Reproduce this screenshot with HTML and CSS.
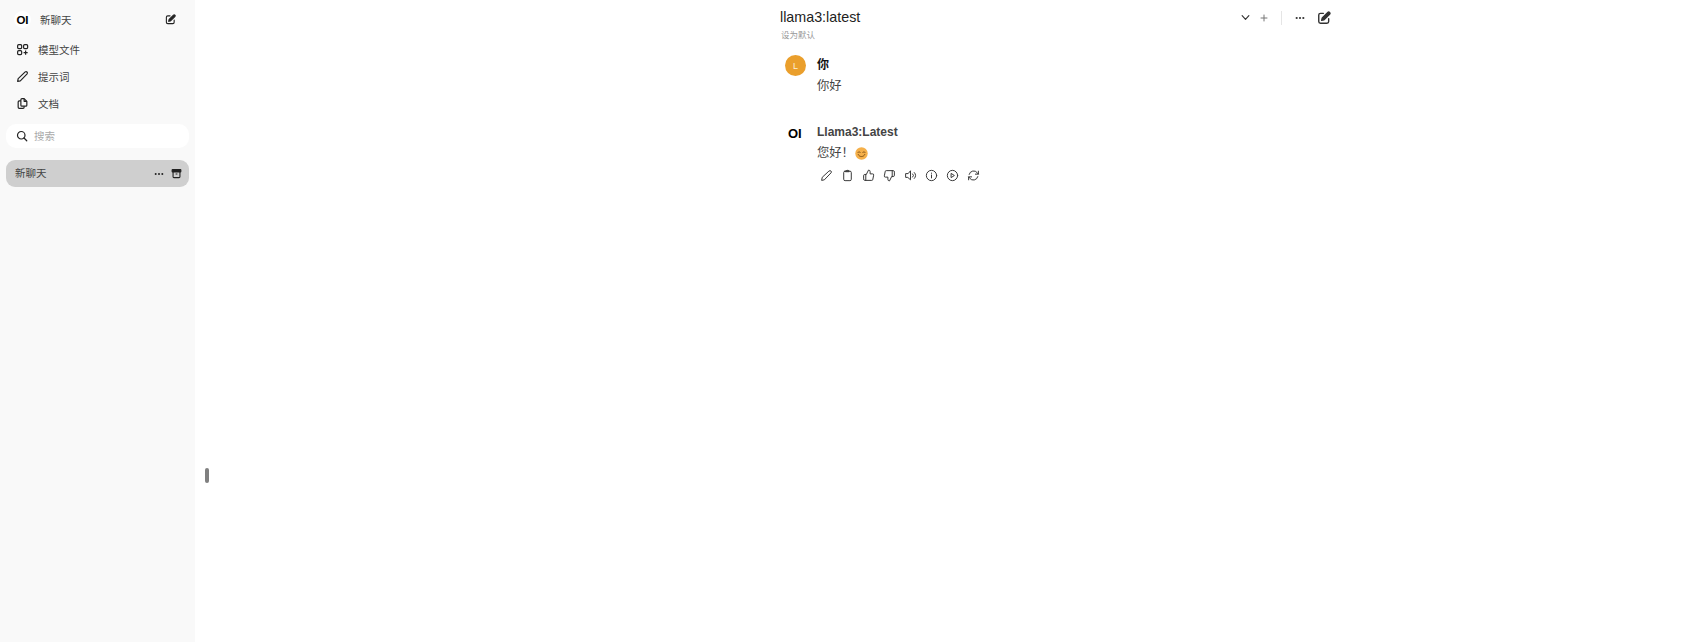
FILE: index.html
```html
<!DOCTYPE html>
<html lang="zh">
<head>
  <meta charset="UTF-8">
  <meta name="viewport" content="width=device-width, initial-scale=1.0">
  <title>新聊天</title>
  <link rel="stylesheet" href="styles.css">
</head>
<body>
  <!-- Barra lateral -->
  <aside class="sidebar">
    <div class="side-head">
      <span class="logo-wrap"><span class="logo small">OI</span></span>
      <span class="side-title">新聊天</span>
      <svg class="ico-new" viewBox="0 0 24 24" fill="none" stroke="currentColor" stroke-width="2.400" stroke-linecap="round" stroke-linejoin="round"><path d="M11 4H6a3 3 0 0 0-3 3v11a3 3 0 0 0 3 3h11a3 3 0 0 0 3-3v-5"/><path d="M18.500 2.500a2.100 2.100 0 0 1 3 3L12 15l-4 1 1-4z" fill="currentColor"/></svg>
    </div>
    <nav class="side-nav">
      <a class="nav-item">
        <svg class="ico" viewBox="0 0 24 24" fill="none" stroke="currentColor" stroke-width="2.200"><rect x="3" y="3" width="7.500" height="7.500" rx="2"/><rect x="14" y="3" width="7.500" height="7.500" rx="2"/><rect x="3" y="14" width="7.500" height="7.500" rx="2"/><path d="M17.750 14v7.500M14 17.750h7.500"/></svg>
        <span>模型文件</span>
      </a>
      <a class="nav-item">
        <svg class="ico" viewBox="0 0 24 24" fill="none" stroke="currentColor" stroke-width="2.200" stroke-linejoin="round"><path d="M17 3.500a2.500 2.500 0 0 1 3.500 3.500L8 20l-5 1 1-5z"/></svg>
        <span>提示词</span>
      </a>
      <a class="nav-item">
        <svg class="ico" viewBox="0 0 24 24" fill="none" stroke="currentColor" stroke-width="2.200" stroke-linejoin="round"><path d="M9 7H6a2 2 0 0 0-2 2v10a2 2 0 0 0 2 2h7a2 2 0 0 0 2-2v-2"/><path d="M9 5a2 2 0 0 1 2-2h4l5 5v7a2 2 0 0 1-2 2h-7a2 2 0 0 1-2-2z"/><path d="M15 3v5h5"/></svg>
        <span>文档</span>
      </a>
    </nav>
    <div class="search">
      <svg class="ico-search" viewBox="0 0 24 24" fill="none" stroke="currentColor" stroke-width="2.400" stroke-linecap="round"><circle cx="10.500" cy="10.500" r="7.500"/><path d="M16 16l5.500 5.500"/></svg>
      <span class="search-text">搜索</span>
    </div>
    <div class="chat-row">
      <span class="chat-name">新聊天</span>
      <svg class="ico-dots" viewBox="0 0 24 24" fill="currentColor"><circle cx="4" cy="12" r="2.400"/><circle cx="12" cy="12" r="2.400"/><circle cx="20" cy="12" r="2.400"/></svg>
      <svg class="ico-archive" viewBox="0 0 24 24" fill="none" stroke="currentColor" stroke-width="2.400" stroke-linejoin="round"><rect x="2.500" y="3.500" width="19" height="5" rx="1" fill="currentColor"/><path d="M4.500 8.500V19a2 2 0 0 0 2 2h11a2 2 0 0 0 2-2V8.500M10 13h4"/></svg>
    </div>
  </aside>

  <div class="drag-handle"></div>

  <!-- Contenido -->
  <main class="main">
    <div class="column">
      <header class="top">
        <div class="model-col">
          <div class="model-name">llama3:latest</div>
          <div class="set-default">设为默认</div>
        </div>
        <div class="top-tools">
          <svg class="chev" viewBox="0 0 24 24" fill="none" stroke="currentColor" stroke-width="3" stroke-linecap="round" stroke-linejoin="round"><path d="M3 7l9 10 9-10"/></svg>
          <svg class="plus" viewBox="0 0 24 24" fill="none" stroke="currentColor" stroke-width="3" stroke-linecap="round"><path d="M12 3v18M3 12h18"/></svg>
          <span class="divider"></span>
          <svg class="dots" viewBox="0 0 24 24" fill="currentColor"><circle cx="4" cy="12" r="2.600"/><circle cx="12" cy="12" r="2.600"/><circle cx="20" cy="12" r="2.600"/></svg>
          <svg class="ico-edit" viewBox="0 0 24 24" fill="none" stroke="currentColor" stroke-width="2.400" stroke-linecap="round" stroke-linejoin="round"><path d="M11 4H6a3 3 0 0 0-3 3v11a3 3 0 0 0 3 3h11a3 3 0 0 0 3-3v-5"/><path d="M18.500 2.500a2.100 2.100 0 0 1 3 3L12 15l-4 1 1-4z" fill="currentColor"/></svg>
        </div>
      </header>

      <section class="msg msg-user">
        <div class="avatar-col"><span class="avatar">L</span></div>
        <div class="msg-body">
          <div class="who">你</div>
          <div class="text">你好</div>
        </div>
      </section>

      <section class="msg msg-bot">
        <div class="avatar-col"><span class="logo big">OI</span></div>
        <div class="msg-body">
          <div class="who who-bot">Llama3:Latest</div>
          <div class="text"><span>您好！</span><svg class="emoji" viewBox="0 0 24 24"><circle cx="12" cy="12" r="11.500" fill="#f5b04a"/><path d="M5.500 10c1-1.800 3-1.800 4 0M14.500 10c1-1.800 3-1.800 4 0" fill="none" stroke="#7a4c14" stroke-width="1.800" stroke-linecap="round"/><path d="M6 14c2 5 10 5 12 0" fill="none" stroke="#7a4c14" stroke-width="1.800" stroke-linecap="round"/></svg></div>
          <div class="actions">
            <svg viewBox="0 0 24 24"><path d="M17 3.500a2.500 2.500 0 0 1 3.500 3.500L8 20l-5 1 1-5z"/></svg>
            <svg viewBox="0 0 24 24"><rect x="5" y="4" width="14" height="17.500" rx="2.500"/><path d="M9 4a2 2 0 0 1 2-1.500h2A2 2 0 0 1 15 4v1H9z"/></svg>
            <svg viewBox="0 0 24 24"><path d="M7 10v11M3 12a2 2 0 0 1 2-2h3l4-8a3 3 0 0 1 3 3v4h4.500a2 2 0 0 1 2 2.400l-1.500 7.600a2 2 0 0 1-2 2H5a2 2 0 0 1-2-2z"/></svg>
            <svg viewBox="0 0 24 24"><path d="M17 14V3M21 12a2 2 0 0 1-2 2h-3l-4 8a3 3 0 0 1-3-3v-4H4.500a2 2 0 0 1-2-2.400l1.500-7.600a2 2 0 0 1 2-2H19a2 2 0 0 1 2 2z"/></svg>
            <svg viewBox="0 0 24 24"><path d="M12 4v16l-5-4.500H3v-7h4zM16 9a4 4 0 0 1 0 6M19 6.500a8 8 0 0 1 0 11"/></svg>
            <svg viewBox="0 0 24 24"><circle cx="12" cy="12" r="9.500"/><path d="M12 11v5.500M12 7.500v.5"/></svg>
            <svg viewBox="0 0 24 24"><circle cx="12" cy="12" r="9.500"/><path d="M10 8.500l5.500 3.500-5.500 3.500z"/></svg>
            <svg viewBox="0 0 24 24"><path d="M4 10a8.500 8.500 0 0 1 15-3l2 2.500M21 4v5.500h-5.500M20 14a8.500 8.500 0 0 1-15 3l-2-2.500M3 20v-5.500h5.500"/></svg>
          </div>
        </div>
      </section>
    </div>
  </main>
</body>
</html>
```

FILE: styles.css
```css
* {
  box-sizing: border-box;
}

html, body {
  height: 100%;
}

body {
  margin: 0;
  display: flex;
  background-color: #fff;
  color: #222;
  font-family: "Liberation Sans", "Noto Sans CJK SC", sans-serif;
  overflow: hidden;
}

svg {
  flex: none;
}

.ico {
  width: 13px;
  height: 13px;
  color: #222;
}

.ico-search {
  width: 12px;
  height: 12px;
  color: #222;
}

/* Barra lateral */
.sidebar {
  width: 195px;
  flex: none;
  background-color: #f9f9f9;
  padding: 6px 6px 0;
  font-size: 10.5px;
  color: #444;
}

.side-head {
  display: flex;
  align-items: center;
  height: 28px;
  padding: 0 13px 1px 8px;
}

.logo-wrap {
  width: 17px;
  height: 17px;
  display: flex;
  align-items: center;
  justify-content: center;
  background-color: #fff;
  border-radius: 50%;
}

.logo {
  font-weight: 700;
  color: #000;
}

.logo.small {
  font-size: 11.5px;
}

.logo.big {
  font-size: 13px;
}

.side-title {
  margin: 0 0 1px 9px;
  flex: 1;
}

.ico-new {
  width: 11px;
  height: 11px;
  color: #222;
}

.side-nav {
  margin-top: 2px;
}

.nav-item {
  display: flex;
  align-items: center;
  gap: 9px;
  height: 27px;
  padding-left: 10px;
}

.search {
  display: flex;
  align-items: center;
  gap: 6px;
  height: 24px;
  margin-top: 7px;
  padding-left: 10px;
  background-color: #fff;
  border-radius: 10px;
  color: #aaa;
}

.search-text {
  font-size: 10.5px;
  margin-bottom: 2px;
}

.chat-row {
  display: flex;
  align-items: center;
  height: 27px;
  margin-top: 12px;
  padding: 0 7px 0 9px;
  background-color: #cfcfcf;
  border-radius: 9px;
  color: #444;
}

.chat-name {
  flex: 1;
  margin-bottom: 2px;
}

.ico-dots {
  width: 10px;
  height: 10px;
  color: #222;
  margin-right: 7px;
}

.ico-archive {
  width: 11px;
  height: 11px;
  color: #222;
}

.drag-handle {
  position: absolute;
  left: 205px;
  top: 468px;
  width: 4px;
  height: 15px;
  border-radius: 2px;
  background-color: #808080;
}

/* Contenido */
.main {
  flex: 1;
  padding-left: 585px;
}

.column {
  width: 551px;
}

.top {
  display: flex;
  justify-content: space-between;
  align-items: flex-start;
  height: 47px;
  padding-top: 8px;
}

.model-name {
  font-size: 14.3px;
  line-height: 19px;
  color: #222;
}

.set-default {
  margin: 3px 0 0 1px;
  font-size: 8.5px;
  line-height: 11px;
  color: #999;
}

.top-tools {
  display: flex;
  align-items: center;
  height: 19px;
  color: #333;
}

.chev {
  width: 9px;
  height: 9px;
  color: #333;
}

.plus {
  width: 8px;
  height: 8px;
  margin-left: 10px;
  color: #777;
}

.divider {
  width: 1px;
  height: 14px;
  margin: 0 13px;
  background-color: #e5e5e5;
}

.dots {
  width: 10px;
  height: 10px;
  color: #333;
  margin-right: 12px;
}

.ico-edit {
  width: 14px;
  height: 14px;
  color: #333;
}

.msg {
  display: flex;
}

.msg-user {
  height: 68px;
}

.avatar-col {
  width: 37px;
  flex: none;
  padding: 8px 0 0 5px;
}

.avatar {
  display: flex;
  align-items: center;
  justify-content: center;
  width: 21px;
  height: 21px;
  border-radius: 50%;
  background-color: #ea9f2c;
  color: #fdf0d8;
  font-size: 9px;
}

.msg-bot .avatar-col {
  padding-top: 9px;
  padding-left: 8px;
}

.who {
  font-size: 12px;
  font-weight: 700;
  line-height: 18px;
  margin-top: 9px;
  color: #111;
}

.who-bot {
  margin-top: 8px;
  color: #444;
}

.text {
  display: flex;
  align-items: center;
  font-size: 12.3px;
  line-height: 18px;
  margin-top: 3px;
  color: #444;
}

.emoji {
  width: 13px;
  height: 13px;
  margin-left: 1px;
}

.actions {
  display: flex;
  gap: 8px;
  margin-top: 7px;
  padding-left: 3px;
}

.actions svg {
  width: 13px;
  height: 13px;
  fill: none;
  stroke: #333;
  stroke-width: 1.800;
  stroke-linecap: round;
  stroke-linejoin: round;
}
```
